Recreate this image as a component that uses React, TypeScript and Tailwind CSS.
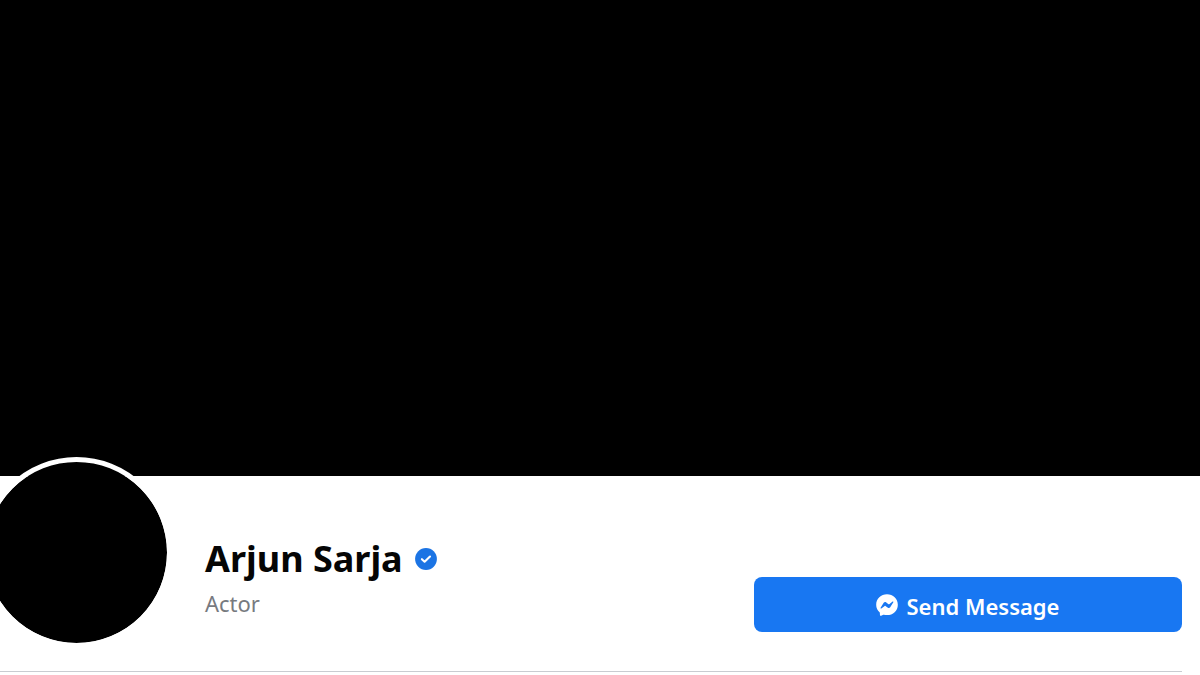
import React from "react";

function VerifiedBadge() {
  return (
    <svg viewBox="0 0 22 22" className="size-[22px] shrink-0" role="img" aria-label="Verified account">
      <circle cx="11" cy="11" r="10.9" fill="#1b74e4" />
      <path d="M6.9 11.2 9.6 13.7 15 8.5" fill="none" stroke="#fff" strokeWidth="2.1" strokeLinecap="round" strokeLinejoin="round" />
    </svg>
  );
}

function MessengerIcon() {
  return (
    <svg viewBox="0 0 24 24" className="size-[22px] shrink-0" aria-hidden="true">
      <path
        fill="#fff"
        d="M12 .2C5.400.2.2 5.100.2 11.600c0 3.400 1.400 6.300 3.700 8.300.2.2.3.4.3.7l.1 2.200c0 .7.7 1.100 1.300.9l2.400-1.100c.2-.1.4-.1.6-.1 1.100.3 2.200.5 3.400.5 6.600 0 11.800-4.900 11.800-11.400S18.600.2 12 .2z"
      />
      <path
        fill="#1877f2"
        d="M5 15l3.400-5.400c.6-.9 1.700-1.100 2.500-.5l2.700 2c.3.2.6.2.8 0l3.700-2.800c.5-.4 1.100.2.8.8l-3.400 5.400c-.6.9-1.700 1.100-2.500.5l-2.700-2c-.3-.2-.6-.2-.8 0l-3.700 2.800c-.5.400-1.100-.200-.8-.8z"
      />
    </svg>
  );
}

export default function App() {
  return (
    <main className="min-h-screen overflow-hidden bg-white font-['Noto_Sans',sans-serif]">
      <div className="h-[476px] bg-black" />
      <header className="mr-[18px] flex items-start border-b border-[#c9ccd1] pb-[23px]">
        <div className="-mt-[19px] -ml-[19px] size-[191px] shrink-0 rounded-full border-5 border-white bg-black bg-clip-padding" />
        <div className="ml-[33px] flex grow flex-col pt-[59px]">
          <div className="flex items-center gap-3">
            <h1 className="text-[36px] leading-[48px] font-bold whitespace-nowrap text-[#050505]">Arjun Sarja</h1>
            <VerifiedBadge />
          </div>
          <p className="text-[22px] leading-[40px] text-[#777a7f]">Actor</p>
        </div>
        <button
          type="button"
          className="mt-[101px] mb-px flex h-[55px] w-[428px] shrink-0 items-center justify-center gap-2 rounded-lg bg-[#1877f2] text-[22px] font-semibold text-white"
        >
          <MessengerIcon />
          <span className="pt-1">Send Message</span>
        </button>
      </header>
    </main>
  );
}
